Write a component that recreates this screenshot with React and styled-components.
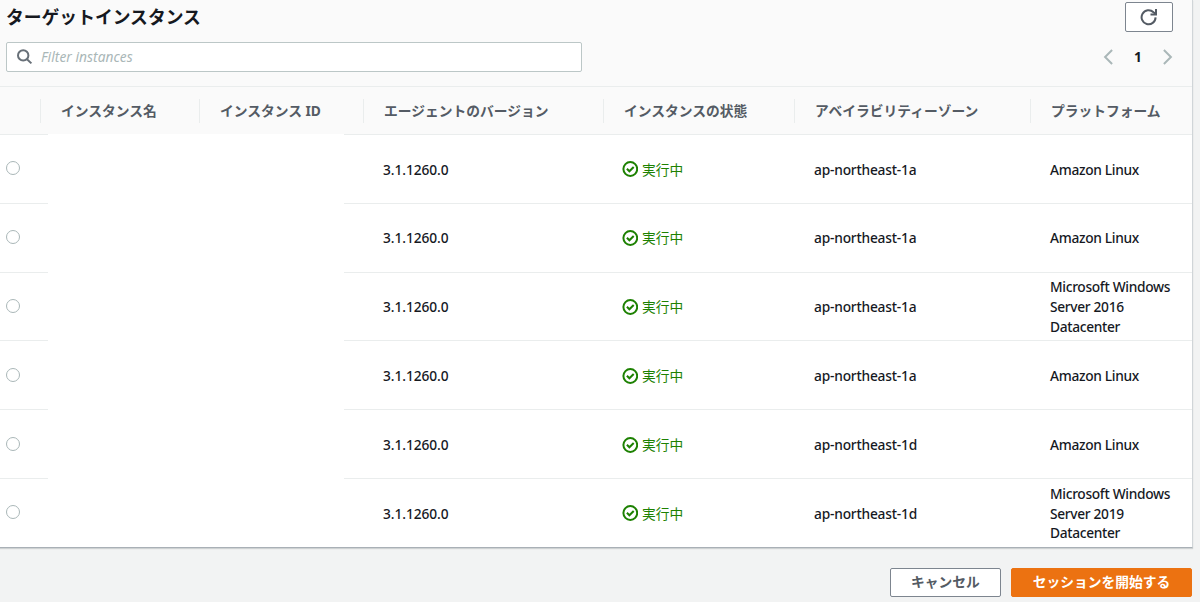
import React from "react";
import styled, { createGlobalStyle } from "styled-components";

const GlobalStyle = createGlobalStyle`
  * { box-sizing: border-box; }
  body {
    margin: 0;
    background: #f2f3f3;
    color: #16191f;
    font-family: "Noto Sans", "Noto Sans CJK JP", sans-serif;
    font-size: 13.75px;
    overflow: hidden;
  }
  button, input { font: inherit; }
`;

const Page = styled.main`
  width: 1200px;
  height: 602px;
  overflow: hidden;
`;

const Panel = styled.section`
  width: 1193px;
  height: 548px;
  background: #fff;
  border-right: 1px solid #d0d5d8;
  border-bottom: 1px solid #a9b0b6;
  box-shadow: 0 1px 1px rgba(0, 28, 36, 0.15);
`;

const PanelHeader = styled.header`
  height: 87px;
  padding: 2px 19px 0 6px;
  background: #fafafa;
  border-bottom: 1px solid #eaeded;
`;

const HeaderLine = styled.div`
  display: flex;
  justify-content: space-between;
  align-items: center;
  height: ${(p) => p.$height}px;
  margin-bottom: ${(p) => p.$gap || 0}px;
`;

const Title = styled.h2`
  margin: 0;
  font-size: 17.8px;
  line-height: 30px;
  font-weight: 700;
`;

const RefreshButton = styled.button`
  display: flex;
  align-items: center;
  justify-content: center;
  width: 48px;
  height: 30px;
  padding: 0;
  background: #fff;
  border: 1px solid #7d858f;
  border-radius: 2px;
  color: #545b64;
`;

const Search = styled.label`
  display: flex;
  align-items: center;
  gap: 8px;
  width: 576px;
  height: 30px;
  padding: 0 10px;
  background: #fff;
  border: 1px solid #bcc7c7;
  border-radius: 2px;
`;

const SearchInput = styled.input`
  flex: 1;
  padding: 0 0 2px;
  border: 0;
  outline: 0;
  background: transparent;
  letter-spacing: 0.05px;
  &::placeholder {
    color: #aab7b8;
    font-style: italic;
    opacity: 1;
  }
`;

const Pager = styled.nav`
  display: flex;
  align-items: center;
  justify-content: space-between;
  width: 70px;
  padding-bottom: 1px;
  color: #aab7b8;
`;

const PageNumber = styled.span`
  color: #16191f;
  font-weight: 700;
  line-height: 20px;
`;

const HeadRow = styled.div`
  display: grid;
  grid-template-columns: 40px 159px 164px 240px 191px 236px 162px;
  align-items: center;
  height: 47px;
  background: #fafafa;
`;

const HeadCell = styled.div`
  height: 24px;
  padding-left: 20px;
  border-left: 1px solid ${(p) => (p.$first ? "transparent" : "#eaeded")};
  color: #545b64;
  font-weight: 700;
  line-height: 24px;
  white-space: nowrap;
`;

const Row = styled.div`
  display: grid;
  grid-template-columns: 48px 296px 278px 192px 236px 142px;
  height: 68.8px;
`;

const Cell = styled.div`
  display: flex;
  align-items: center;
  padding-top: 1px;
  padding-left: ${(p) => p.$inset || 0}px;
  border-top: 1px solid ${(p) => (p.$blank ? "transparent" : "#eaeded")};
  font-weight: ${(p) => p.$weight || 400};
  letter-spacing: ${(p) => p.$tracking || 0}px;
  line-height: 19.7px;
`;

const Radio = styled.span`
  width: 14px;
  height: 14px;
  margin-bottom: 2px;
  border: 1px solid #aab7b8;
  border-radius: 50%;
  background: #fff;
`;

const Status = styled.span`
  display: flex;
  align-items: center;
  gap: 4px;
  color: #1d8102;
`;

const Actions = styled.footer`
  display: flex;
  justify-content: flex-end;
  gap: 10px;
  padding: 20px 8px 0 0;
`;

const Button = styled.button`
  width: ${(p) => p.$width}px;
  height: 29px;
  padding: 0 0 2px;
  background: ${(p) => (p.$primary ? "#ec7211" : "#fff")};
  border: 1px solid ${(p) => (p.$primary ? "#ec7211" : "#7d858f")};
  border-radius: 2px;
  color: ${(p) => (p.$primary ? "#fff" : "#545b64")};
  font-weight: 700;
  line-height: 25px;
`;

const RefreshIcon = () => (
  <svg width="18" height="18" viewBox="0 0 18 18" fill="none" stroke="currentColor" strokeWidth="2">
    <path d="M15.6 9.4a7 7 0 1 1-2.1-5.2L15.8 6" />
    <path d="M16 1v5.5h-5.5" />
  </svg>
);

const SearchIcon = () => (
  <svg width="16" height="16" viewBox="0 0 16 16" fill="none" stroke="#687078" strokeWidth="2">
    <circle cx="6.2" cy="6.4" r="5.2" />
    <path d="M10 10.2L14.4 14.4" />
  </svg>
);

const Chevron = ({ flip }) => (
  <svg width="10" height="16" viewBox="0 0 10 16" fill="none" stroke="currentColor" strokeWidth="2">
    <path d={flip ? "M0.9 1l7 7-7 7" : "M9.1 1l-7 7 7 7"} />
  </svg>
);

const CheckIcon = () => (
  <svg width="16" height="16" viewBox="0 0 16 16" fill="none" stroke="currentColor" strokeWidth="2">
    <circle cx="8.3" cy="8" r="6.9" />
    <path d="M4.9 7.8l2.5 2.5 4.3-4.3" />
  </svg>
);

const columns = [
  "",
  "インスタンス名",
  "インスタンス ID",
  "エージェントのバージョン",
  "インスタンスの状態",
  "アベイラビリティーゾーン",
  "プラットフォーム",
];

const instances = [
  { zone: "ap-northeast-1a", platform: "Amazon Linux" },
  { zone: "ap-northeast-1a", platform: "Amazon Linux" },
  { zone: "ap-northeast-1a", platform: "Microsoft Windows Server 2016 Datacenter" },
  { zone: "ap-northeast-1a", platform: "Amazon Linux" },
  { zone: "ap-northeast-1d", platform: "Amazon Linux" },
  { zone: "ap-northeast-1d", platform: "Microsoft Windows Server 2019 Datacenter" },
];

export default function App() {
  return (
    <Page>
      <GlobalStyle />
      <Panel>
        <PanelHeader>
          <HeaderLine $height={30} $gap={10}>
            <Title>ターゲットインスタンス</Title>
            <RefreshButton aria-label="更新"><RefreshIcon /></RefreshButton>
          </HeaderLine>
          <HeaderLine $height={30}>
            <Search>
              <SearchIcon />
              <SearchInput placeholder="Filter instances" />
            </Search>
            <Pager>
              <Chevron />
              <PageNumber>1</PageNumber>
              <Chevron flip />
            </Pager>
          </HeaderLine>
        </PanelHeader>
        <HeadRow>
          {columns.map((name, i) => (
            <HeadCell key={i} $first={i === 0}>{name}</HeadCell>
          ))}
        </HeadRow>
        {instances.map((item, i) => (
          <Row key={i}>
            <Cell $inset={6}><Radio /></Cell>
            <Cell $blank />
            <Cell $inset={39} $weight={500} $tracking={-0.08}>3.1.1260.0</Cell>
            <Cell><Status><CheckIcon />実行中</Status></Cell>
            <Cell $weight={500} $tracking={-0.2}>{item.zone}</Cell>
            <Cell $weight={500} $tracking={-0.32}>{item.platform}</Cell>
          </Row>
        ))}
      </Panel>
      <Actions>
        <Button $width={111}>キャンセル</Button>
        <Button $width={181} $primary>セッションを開始する</Button>
      </Actions>
    </Page>
  );
}
